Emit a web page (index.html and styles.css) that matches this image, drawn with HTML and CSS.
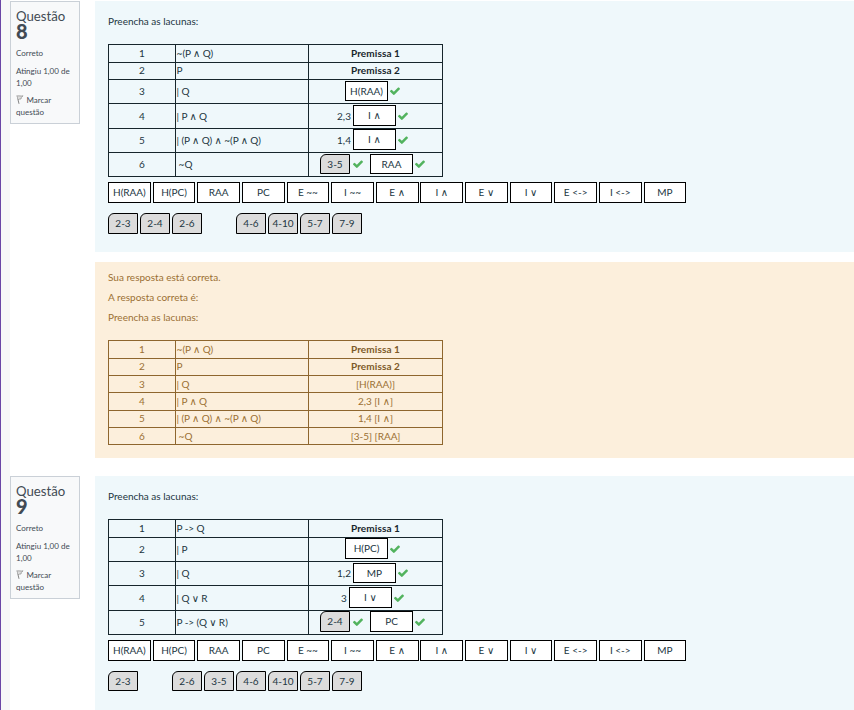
FILE: index.html
```
<!DOCTYPE html>
<html lang="pt-br">
<head>
<meta charset="utf-8">
<title>Questionário</title>
<link rel="stylesheet" href="styles.css">
</head>
<body>
<svg class="defs" width="0" height="0" aria-hidden="true">
  <symbol id="check" viewBox="120 300 1550 1190"><path d="M1671 566q0 40-28 68l-724 724-136 136q-28 28-68 28t-68-28l-136-136-362-362q-28-28-28-68t28-68l136-136q28-28 68-28t68 28l294 295 656-657q28-28 68-28t68 28l136 136q28 28 28 68z"/></symbol>
  <symbol id="flag" viewBox="0 0 8 9"><path d="M1 .5L3 8.8" fill="none" stroke="#777" stroke-width=".9"/><path d="M1.2 1.2C3 .2 4.400 1.600 7 .8L5.300 2.600 5 4C4 4.200 3.500 3.800 2 4.700" fill="#ddd" stroke="#888" stroke-width=".7"/></symbol>
</svg>
<main class="page">
  <section class="question first">
    <aside class="info">
      <h3 class="no">Questão <b>8</b></h3>
      <p class="state">Correto</p>
      <p class="grade">Atingiu 1,00 de 1,00</p>
      <p class="flag"><svg><use href="#flag"/></svg>Marcar questão</p>
    </aside>
    <div class="content">
      <div class="formulation">
        <p class="prompt">Preencha as lacunas:</p>
        <table class="proof">
          <tr class="r18"><td>1</td><td>~(P ∧ Q)</td><td><b>Premissa 1</b></td></tr>
          <tr class="r17"><td>2</td><td>P</td><td><b>Premissa 2</b></td></tr>
          <tr class="r24"><td>3</td><td>| Q</td><td><div class="answer"><span class="chip">H(RAA)</span><svg class="ok"><use href="#check"/></svg></div></td></tr>
          <tr class="r25"><td>4</td><td>| P ∧ Q</td><td><div class="answer tall"><span class="ref">2,3</span><span class="chip">I ∧</span><svg class="ok"><use href="#check"/></svg></div></td></tr>
          <tr class="r24"><td>5</td><td>| (P ∧ Q) ∧ ~(P ∧ Q)</td><td><div class="answer tall"><span class="ref">1,4</span><span class="chip">I ∧</span><svg class="ok"><use href="#check"/></svg></div></td></tr>
          <tr class="r24"><td>6</td><td class="out">~Q</td><td><div class="answer"><span class="chip range">3-5</span><svg class="ok gap"><use href="#check"/></svg><span class="chip">RAA</span><svg class="ok"><use href="#check"/></svg></div></td></tr>
        </table>
        <div class="choices rules"><span class="chip">H(RAA)</span><span class="chip">H(PC)</span><span class="chip">RAA</span><span class="chip">PC</span><span class="chip">E ~~</span><span class="chip">I ~~</span><span class="chip">E ∧</span><span class="chip">I ∧</span><span class="chip">E ∨</span><span class="chip">I ∨</span><span class="chip">E &lt;-&gt;</span><span class="chip">I &lt;-&gt;</span><span class="chip">MP</span></div>
        <div class="choices"><span class="chip range">2-3</span><span class="chip range">2-4</span><span class="chip range">2-6</span><span class="slot"></span><span class="chip range">4-6</span><span class="chip range">4-10</span><span class="chip range">5-7</span><span class="chip range">7-9</span></div>
      </div>
      <div class="outcome">
        <p>Sua resposta está correta.</p>
        <p>A resposta correta é:</p>
        <p>Preencha as lacunas:</p>
        <table class="proof">
          <tr class="r18"><td>1</td><td>~(P ∧ Q)</td><td><b>Premissa 1</b></td></tr>
          <tr class="r17"><td>2</td><td>P</td><td><b>Premissa 2</b></td></tr>
          <tr class="r17 low"><td>3</td><td>| Q</td><td>[H(RAA)]</td></tr>
          <tr class="r18"><td>4</td><td>| P ∧ Q</td><td>2,3 [I ∧]</td></tr>
          <tr class="r17"><td>5</td><td>| (P ∧ Q) ∧ ~(P ∧ Q)</td><td>1,4 [I ∧]</td></tr>
          <tr class="r17 low"><td>6</td><td class="out">~Q</td><td>[3-5] [RAA]</td></tr>
        </table>
      </div>
    </div>
  </section>
  <section class="question">
    <aside class="info">
      <h3 class="no">Questão <b>9</b></h3>
      <p class="state">Correto</p>
      <p class="grade">Atingiu 1,00 de 1,00</p>
      <p class="flag"><svg><use href="#flag"/></svg>Marcar questão</p>
    </aside>
    <div class="content">
      <div class="formulation last">
        <p class="prompt">Preencha as lacunas:</p>
        <table class="proof">
          <tr class="r18"><td>1</td><td>P -&gt; Q</td><td><b>Premissa 1</b></td></tr>
          <tr class="r24"><td>2</td><td>| P</td><td><div class="answer tall"><span class="chip">H(PC)</span><svg class="ok"><use href="#check"/></svg></div></td></tr>
          <tr class="r24"><td>3</td><td>| Q</td><td><div class="answer"><span class="ref">1,2</span><span class="chip">MP</span><svg class="ok"><use href="#check"/></svg></div></td></tr>
          <tr class="r25 low"><td>4</td><td>| Q ∨ R</td><td><div class="answer tall down"><span class="ref">3</span><span class="chip">I ∨</span><svg class="ok"><use href="#check"/></svg></div></td></tr>
          <tr class="r24"><td>5</td><td>P -&gt; (Q ∨ R)</td><td><div class="answer tall"><span class="chip range">2-4</span><svg class="ok gap"><use href="#check"/></svg><span class="chip">PC</span><svg class="ok"><use href="#check"/></svg></div></td></tr>
        </table>
        <div class="choices rules"><span class="chip">H(RAA)</span><span class="chip">H(PC)</span><span class="chip">RAA</span><span class="chip">PC</span><span class="chip">E ~~</span><span class="chip">I ~~</span><span class="chip">E ∧</span><span class="chip">I ∧</span><span class="chip">E ∨</span><span class="chip">I ∨</span><span class="chip">E &lt;-&gt;</span><span class="chip">I &lt;-&gt;</span><span class="chip">MP</span></div>
        <div class="choices short"><span class="chip range">2-3</span><span class="slot"></span><span class="chip range">2-6</span><span class="chip range">3-5</span><span class="chip range">4-6</span><span class="chip range">4-10</span><span class="chip range">5-7</span><span class="chip range">7-9</span></div>
      </div>
    </div>
  </section>
</main>
</body>
</html>
```
FILE: styles.css
```
* { box-sizing: border-box; }
body {
  margin: 0;
  height: 710px;
  overflow: hidden;
  background: #fff;
  color: #22363f;
  font: 10px/15px Lato, "DejaVu Sans", sans-serif;
}
p, h3 { margin: 0; }
.defs { display: block; }
.page {
  height: 710px;
  overflow: hidden;
  padding-top: 1px;
  border-left: 1px solid #6b46a5;
  background: linear-gradient(to right, #f7f7f7 9px, #fff 9px);
}
.question { display: flex; align-items: flex-start; gap: 15px; padding-left: 9px; }
.question.first { margin-bottom: 18px; }
.info {
  width: 70px;
  height: 123px;
  padding: 6px 5px 0;
  border: 1px solid #cad0d7;
  background: #f8f9fa;
  color: #424b54;
  font-size: 8px;
  line-height: 12px;
}
.no { font-size: 13.200px; line-height: 16px; font-weight: 400; }
.no b { display: block; font-size: 20px; line-height: 15px; font-weight: 900; }
.info p { margin-top: 6px; }
.info .state { margin-top: 8px; }
.info .flag { margin-top: 5px; }
.flag svg { width: 8px; height: 9px; margin-right: 2.500px; vertical-align: -1px; }
.content { flex: 1; }
.formulation { height: 251px; padding: 12px 13px 0; background: #eff8fb; }
.formulation.last { height: 240px; }
.prompt { height: 31px; line-height: 16px; }
.proof { width: 335px; table-layout: fixed; border-collapse: separate; border-spacing: 0; border: solid #17262c; border-width: 1px 0 0 1px; color: inherit; }
.proof td { padding: 0; border: solid #17262c; border-width: 0 1px 1px 0; text-align: center; line-height: 14px; white-space: nowrap; vertical-align: top; padding-top: 1px; }
.proof td:nth-child(1) { width: 67px; }
.proof td:nth-child(2) { width: 133px; padding-left: .6px; text-align: left; word-spacing: -.25px; }
.proof td.out { padding-left: 2.600px; }
.proof b { color: #17262c; font-weight: 700; letter-spacing: .1px; }
.r17 { height: 17px; }
.r18 { height: 18px; }
.r24 { height: 24px; }
.r25 { height: 25px; }
.proof .r18 td { padding-top: 1px; }
.proof .r17 td { padding-top: 0; }
.proof .r17.low td { padding-top: 1px; }
.proof .r24 td { padding-top: 4px; }
.proof .r25 td { padding-top: 5px; }
.proof .r24 td:last-child, .proof .r25 td:last-child { padding-top: 1px; }
.answer { display: flex; align-items: center; justify-content: center; height: 20px; }
.answer.tall { height: 21px; margin-top: -1px; }
.proof .r25 .answer { margin-top: 0; }
.answer .chip { height: 100%; line-height: 18px; align-items: flex-start; }
.ref { margin-right: 2px; }
.chip {
  display: flex;
  align-items: center;
  justify-content: center;
  width: 43px;
  height: 21px;
  border: 1px solid #000;
  background: #fff;
  white-space: nowrap;
}
.chip.range { width: 30px; border-radius: 6px 0 0 0; background: #dcdcdc; }
.ok { width: 10px; height: 8px; margin: 0 6px 0 2px; fill: #52b35e; }
.ok.gap { margin: 0 7px 0 3px; }
.choices { display: flex; gap: 2px; margin-top: 10px; }
.choices.rules { gap: 1.830px; margin-top: 5px; }
.choices.short .chip { height: 20px; }
.rules .chip { width: 42.800px; }
.slot { width: 30px; }
.outcome { height: 196px; margin-top: 10px; padding: 7px 13px 0; background: #fcefdc; color: #9b6f33; }
.outcome p { height: 20px; line-height: 16px; }
.outcome .proof { margin-top: 11px; }
.outcome .proof, .outcome .proof td { border-color: #8e662e; }
.outcome b { color: #7d5a29; }
```
